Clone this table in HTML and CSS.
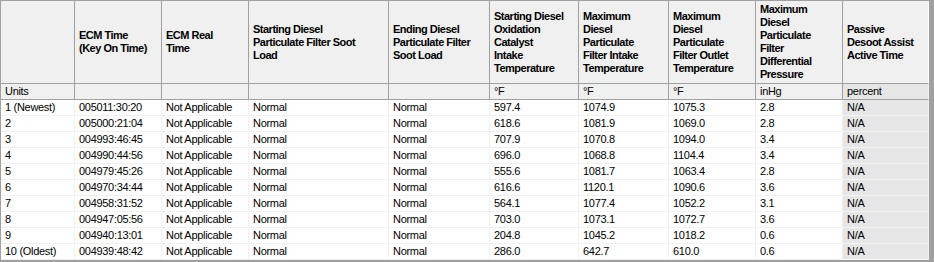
FILE: index.html
```html
<!DOCTYPE html>
<html>
<head>
<meta charset="utf-8">
<link rel="stylesheet" href="styles.css">
</head>
<body>
<div class="frame">
  <div class="row head">
    <div class="hc"></div>
    <div class="hc">ECM Time<br>(Key On Time)</div>
    <div class="hc">ECM Real<br>Time</div>
    <div class="hc">Starting Diesel<br>Particulate Filter Soot<br>Load</div>
    <div class="hc">Ending Diesel<br>Particulate Filter<br>Soot Load</div>
    <div class="hc">Starting Diesel<br>Oxidation<br>Catalyst<br>Intake<br>Temperature</div>
    <div class="hc">Maximum<br>Diesel<br>Particulate<br>Filter Intake<br>Temperature</div>
    <div class="hc">Maximum<br>Diesel<br>Particulate<br>Filter Outlet<br>Temperature</div>
    <div class="hc">Maximum<br>Diesel<br>Particulate<br>Filter<br>Differential<br>Pressure</div>
    <div class="hc last">Passive<br>Desoot Assist<br>Active Time</div>
  </div>
  <div class="row units">
    <div class="uc">Units</div>
    <div class="uc"></div>
    <div class="uc"></div>
    <div class="uc"></div>
    <div class="uc"></div>
    <div class="uc">°F</div>
    <div class="uc">°F</div>
    <div class="uc">°F</div>
    <div class="uc">inHg</div>
    <div class="uc last">percent</div>
  </div>
  <div class="row data"><div class="dc">1 (Newest)</div><div class="dc">005011:30:20</div><div class="dc">Not Applicable</div><div class="dc">Normal</div><div class="dc">Normal</div><div class="dc">597.4</div><div class="dc">1074.9</div><div class="dc">1075.3</div><div class="dc">2.8</div><div class="dc last">N/A</div></div>
  <div class="row data"><div class="dc">2</div><div class="dc">005000:21:04</div><div class="dc">Not Applicable</div><div class="dc">Normal</div><div class="dc">Normal</div><div class="dc">618.6</div><div class="dc">1081.9</div><div class="dc">1069.0</div><div class="dc">2.8</div><div class="dc last">N/A</div></div>
  <div class="row data"><div class="dc">3</div><div class="dc">004993:46:45</div><div class="dc">Not Applicable</div><div class="dc">Normal</div><div class="dc">Normal</div><div class="dc">707.9</div><div class="dc">1070.8</div><div class="dc">1094.0</div><div class="dc">3.4</div><div class="dc last">N/A</div></div>
  <div class="row data"><div class="dc">4</div><div class="dc">004990:44:56</div><div class="dc">Not Applicable</div><div class="dc">Normal</div><div class="dc">Normal</div><div class="dc">696.0</div><div class="dc">1068.8</div><div class="dc">1104.4</div><div class="dc">3.4</div><div class="dc last">N/A</div></div>
  <div class="row data"><div class="dc">5</div><div class="dc">004979:45:26</div><div class="dc">Not Applicable</div><div class="dc">Normal</div><div class="dc">Normal</div><div class="dc">555.6</div><div class="dc">1081.7</div><div class="dc">1063.4</div><div class="dc">2.8</div><div class="dc last">N/A</div></div>
  <div class="row data"><div class="dc">6</div><div class="dc">004970:34:44</div><div class="dc">Not Applicable</div><div class="dc">Normal</div><div class="dc">Normal</div><div class="dc">616.6</div><div class="dc">1120.1</div><div class="dc">1090.6</div><div class="dc">3.6</div><div class="dc last">N/A</div></div>
  <div class="row data"><div class="dc">7</div><div class="dc">004958:31:52</div><div class="dc">Not Applicable</div><div class="dc">Normal</div><div class="dc">Normal</div><div class="dc">564.1</div><div class="dc">1077.4</div><div class="dc">1052.2</div><div class="dc">3.1</div><div class="dc last">N/A</div></div>
  <div class="row data"><div class="dc">8</div><div class="dc">004947:05:56</div><div class="dc">Not Applicable</div><div class="dc">Normal</div><div class="dc">Normal</div><div class="dc">703.0</div><div class="dc">1073.1</div><div class="dc">1072.7</div><div class="dc">3.6</div><div class="dc last">N/A</div></div>
  <div class="row data"><div class="dc">9</div><div class="dc">004940:13:01</div><div class="dc">Not Applicable</div><div class="dc">Normal</div><div class="dc">Normal</div><div class="dc">204.8</div><div class="dc">1045.2</div><div class="dc">1018.2</div><div class="dc">0.6</div><div class="dc last">N/A</div></div>
  <div class="row data"><div class="dc">10 (Oldest)</div><div class="dc">004939:48:42</div><div class="dc">Not Applicable</div><div class="dc">Normal</div><div class="dc">Normal</div><div class="dc">286.0</div><div class="dc">642.7</div><div class="dc">610.0</div><div class="dc">0.6</div><div class="dc last">N/A</div></div>
</div>
</body>
</html>
```

FILE: styles.css
```css
html, body {
  margin: 0;
  padding: 0;
  background: #ffffff;
}

.frame {
  width: 934px;
  height: 262px;
  box-sizing: border-box;
  border-top: 1px solid #a0a0a0;
  border-left: 1px solid #a0a0a0;
  border-right: 5px solid #a0a0a0;
  border-bottom: 2px solid #a0a0a0;
  background: #ababab;
  font-family: "Liberation Sans", Arial, sans-serif;
  font-size: 11px;
  color: #000;
  overflow: hidden;
}

.row {
  display: grid;
  grid-template-columns: 74px 87px 87px 140px 101px 89px 90px 87px 87px 86px;
}

.row > div {
  box-sizing: border-box;
  padding: 0 3px 0 4px;
  white-space: nowrap;
  overflow: hidden;
}

.head {
  height: 83px;
}

.hc {
  background: #f0f0f0;
  border-right: 1px solid #a0a0a0;
  border-bottom: 1px solid #a0a0a0;
  display: flex;
  align-items: center;
  font-weight: bold;
  line-height: 13px;
  letter-spacing: -0.5px;
}

.hc.last {
  border-right: 1px solid #ffffff;
}

.units {
  height: 16px;
}

.uc {
  background: #f0f0f0;
  border-right: 1px solid #a0a0a0;
  border-bottom: 1px solid #a0a0a0;
  line-height: 15px;
  letter-spacing: -0.3px;
}

.uc.last {
  background: #e6e6e6;
  border-right: 1px solid #f0f0f0;
}

.data {
  height: 16px;
}

.dc {
  background: #ffffff;
  border-right: 1px solid #f0f0f0;
  border-bottom: 1px solid #f0f0f0;
  line-height: 15px;
  letter-spacing: -0.3px;
}

.dc.last {
  background: #e6e6e6;
  border-bottom: 1px solid #f4f4f4;
}
```
